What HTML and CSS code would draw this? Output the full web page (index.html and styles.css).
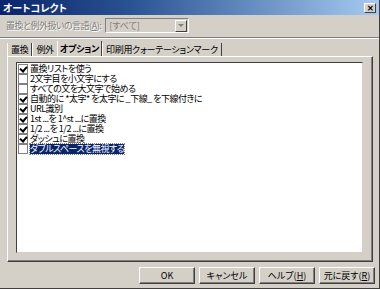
FILE: index.html
```html
<!DOCTYPE html>
<html lang="ja">
<head>
    <meta charset="UTF-8">
    <title>オートコレクト</title>
    <link rel="stylesheet" href="styles.css">
</head>
<body>
    <div class="window">
        <div class="titlebar">
            <span class="title">オートコレクト</span>
            <span class="close">✕</span>
        </div>

        <div class="lang-row">
            <span class="lang-label">置換と例外扱いの言語(<u>A</u>):</span>
            <div class="combo">
                <span class="combo-text">[すべて]</span>
                <span class="combo-btn"></span>
            </div>
        </div>

        <div class="sep"></div>

        <div class="tabs">
            <span class="tab">置換</span>
            <span class="tab">例外</span>
            <span class="tab active">オプション</span>
            <span class="tab">印刷用クォーテーションマーク</span>
        </div>

        <div class="panel">
            <ul class="list">
                <li class="item"><span class="check on"></span><span class="label">置換リストを使う</span></li>
                <li class="item"><span class="check"></span><span class="label">2文字目を小文字にする</span></li>
                <li class="item"><span class="check"></span><span class="label">すべての文を大文字で始める</span></li>
                <li class="item"><span class="check on"></span><span class="label">自動的に *太字* を太字に _下線_ を下線付きに</span></li>
                <li class="item"><span class="check on"></span><span class="label">URL識別</span></li>
                <li class="item"><span class="check on"></span><span class="label">1st ...を 1^st ...に置換</span></li>
                <li class="item"><span class="check on"></span><span class="label">1/2 ...を 1/2 ...に置換</span></li>
                <li class="item"><span class="check on"></span><span class="label">ダッシュに置換</span></li>
                <li class="item"><span class="check"></span><span class="label selected">ダブルスペースを無視する</span></li>
            </ul>
        </div>

        <div class="buttons">
            <button class="btn">OK</button>
            <button class="btn">キャンセル</button>
            <button class="btn">ヘルプ(<u>H</u>)</button>
            <button class="btn">元に戻す(<u>R</u>)</button>
        </div>
    </div>
</body>
</html>
```

FILE: styles.css
```css
html,body{
    width: 100%;
    height: 100%;
    margin: 0;
}
body{
    background-color: #d4d0c8;
    font-family: "Noto Sans CJK JP", "Noto Sans", sans-serif;
    font-size: 9px;
    font-feature-settings: "palt";
    overflow: hidden;
}
u{
    text-decoration: underline;
}
.window{
    box-sizing: border-box;
    width: 380px;
    height: 289px;
    border-right: 1px solid #404040;
    border-bottom: 1px solid #404040;
    display: flex;
    flex-direction: column;
}

/* title bar */
.titlebar{
    height: 15px;
    display: flex;
    align-items: center;
    justify-content: space-between;
    padding: 0 3px 0 3px;
    background-image: linear-gradient(90deg, #0a246a, #2a5494 35%, #a6caf0);
}
.title{
    color: #fff;
    font-weight: bold;
    font-size: 10px;
    line-height: 15px;
}
.close{
    box-sizing: border-box;
    width: 12px;
    height: 10px;
    background-color: #d4d0c8;
    border: 1px solid;
    border-color: #fff #404040 #404040 #fff;
    font-size: 8px;
    line-height: 8px;
    text-align: center;
    color: #000;
    font-weight: bold;
}

/* language row */
.lang-row{
    display: flex;
    align-items: center;
    height: 15px;
    margin-top: 3px;
    padding-left: 6px;
}
.lang-label{
    margin-right: 4px;
    line-height: 11px;
    color: #808080;
    text-shadow: 1px 1px 0 #fff;
    white-space: nowrap;
    letter-spacing: -0.5px;
}
.combo{
    box-sizing: border-box;
    width: 84px;
    height: 15px;
    display: flex;
    align-items: center;
    justify-content: space-between;
    border: 1px solid;
    border-color: #808080 #fff #fff #808080;
    background-color: #d4d0c8;
}
.combo-text{
    padding-left: 3px;
    line-height: 11px;
    color: #808080;
}
.combo-btn{
    box-sizing: border-box;
    width: 12px;
    height: 12px;
    margin-right: 1px;
    border: 1px solid;
    border-color: #fff #404040 #404040 #fff;
    position: relative;
}
.combo-btn::after{
    content: "";
    position: absolute;
    left: 2px;
    top: 3px;
    border-left: 3px solid transparent;
    border-right: 3px solid transparent;
    border-top: 3px solid #808080;
}

.sep{
    height: 0;
    margin-top: 4px;
    border-top: 1px solid #808080;
    border-bottom: 1px solid #fff;
}

/* tabs */
.tabs{
    display: flex;
    align-items: flex-end;
    margin-top: 2px;
    padding-left: 7px;
    height: 15px;
}
.tab{
    height: 13px;
    line-height: 13px;
    padding: 0 3px;
    border-left: 1px solid #fff;
    border-right: 1px solid #404040;
    white-space: nowrap;
    letter-spacing: -0.3px;
}
.tab.active{
    height: 15px;
    line-height: 15px;
    font-weight: bold;
    margin-left: -1px;
    padding: 0 2px;
}

/* panel */
.panel{
    box-sizing: border-box;
    height: 206px;
    margin: 0 6px 0 7px;
    border: 1px solid;
    border-color: #fff #404040 #404040 #fff;
    box-shadow: inset -1px -1px 0 #808080;
    padding: 5px 9px 8px 8px;
}
.list{
    box-sizing: border-box;
    height: 100%;
    margin: 0;
    padding: 1px 0 0 1px;
    list-style: none;
    background-color: #fff;
    border: 1px solid;
    border-color: #404040 #d4d0c8 #d4d0c8 #404040;
}
.item{
    display: flex;
    align-items: center;
    height: 10px;
    line-height: 10px;
}
.check{
    box-sizing: border-box;
    width: 10px;
    height: 10px;
    border: 1px solid #808080;
    margin-right: 2px;
    position: relative;
    flex: none;
}
.check.on::after{
    content: "";
    position: absolute;
    left: 2px;
    top: 0;
    width: 3px;
    height: 5px;
    border: solid #000;
    border-width: 0 2px 2px 0;
    transform: rotate(40deg);
}
.label{
    white-space: nowrap;
    letter-spacing: -0.5px;
}
.selected{
    background-color: #0a246a;
    color: #fff;
    outline: 1px dotted #808080;
}

/* buttons */
.buttons{
    display: flex;
    justify-content: flex-end;
    gap: 4px;
    margin-top: 5px;
    padding-right: 4px;
}
.btn{
    box-sizing: border-box;
    width: 56px;
    height: 17px;
    padding: 0;
    font-family: inherit;
    font-size: 9px;
    line-height: 13px;
    font-feature-settings: "palt";
    color: #000;
    background-color: #d4d0c8;
    border: 1px solid;
    border-color: #fff #404040 #404040 #fff;
    box-shadow: inset -1px -1px 0 #808080;
}
```
